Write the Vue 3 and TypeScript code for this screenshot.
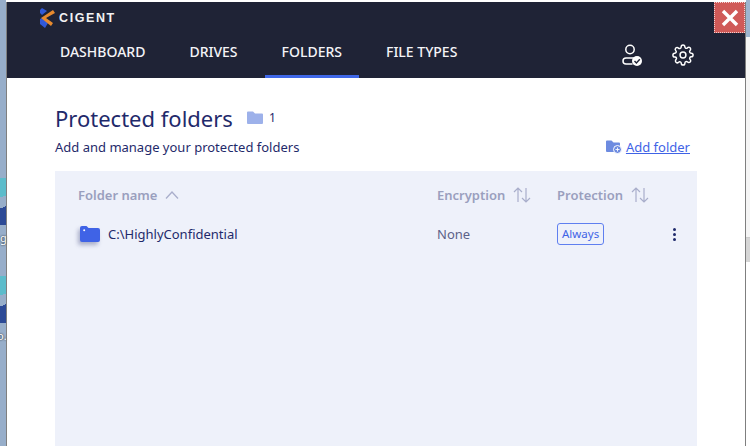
<script setup lang="ts">
const tabs = ['DASHBOARD', 'DRIVES', 'FOLDERS', 'FILE TYPES']
</script>

<template>
  <div class="desktop">
    <div class="left-strip">
      <div class="tile"></div>
      <span class="lab lab-a">g</span>
      <div class="tile tile-b"></div>
      <span class="lab lab-b">o.</span>
    </div>
    <div class="window">
      <header class="head">
        <div class="brand">
          <svg class="logo" width="16" height="20" viewBox="0 0 16 20">
            <path d="M3 0 L8 3 L3 7 L1 5 V2 Z" fill="#3159d8" />
            <path d="M1 11 L3 10 L9 15 L6 20 L1 16 Z" fill="#3159d8" />
            <path d="M14 2 L16 5 L7 10 L14 15 L12 18 L2 10 Z" fill="#e88a2e" />
          </svg>
          <span class="brand-name">CIGENT</span>
        </div>
        <nav class="nav">
          <a v-for="t in tabs" :key="t" class="tab" :class="{ on: t === 'FOLDERS' }">{{ t }}</a>
          <div class="tools">
            <svg width="24" height="24" viewBox="0 0 24 24" fill="none" stroke="#fff" stroke-width="1.5">
              <circle cx="10" cy="6.5" r="4.2" />
              <path d="M14 15 H6 A3 3 0 0 0 6 21 H12" stroke-linecap="round" />
              <circle cx="17" cy="18" r="5" fill="#fff" stroke="none" />
              <path d="M14.5 18 L16.4 20 L19.8 16.2" stroke="#1f2336" stroke-width="1.4" />
            </svg>
            <svg width="22" height="22" viewBox="0 0 24 24" fill="none" stroke="#fff" stroke-width="1.6" stroke-linejoin="round">
              <circle cx="12" cy="12" r="3.2" />
              <path d="M19.4 15a1.65 1.65 0 0 0 .33 1.82l.06.06a2 2 0 1 1-2.83 2.83l-.06-.06a1.65 1.65 0 0 0-2.82 1.17V21a2 2 0 1 1-4 0v-.09a1.65 1.65 0 0 0-2.82-1.11l-.06.06a2 2 0 1 1-2.83-2.83l.06-.06a1.65 1.65 0 0 0-1.17-2.82H3a2 2 0 1 1 0-4h.09A1.65 1.65 0 0 0 4.2 7.33l-.06-.06a2 2 0 1 1 2.83-2.83l.06.06a1.65 1.65 0 0 0 1.82.33H9a1.65 1.65 0 0 0 1-1.51V3a2 2 0 1 1 4 0v.09a1.65 1.65 0 0 0 2.82 1.17l.06-.06a2 2 0 1 1 2.83 2.83l-.06.06a1.65 1.65 0 0 0-.33 1.82V9a1.65 1.65 0 0 0 1.51 1H21a2 2 0 1 1 0 4h-.09a1.65 1.65 0 0 0-1.51 1z" />
            </svg>
          </div>
        </nav>
      </header>

      <main class="page">
        <div class="title-row">
          <h1>Protected folders</h1>
          <svg width="16" height="13" viewBox="0 0 16 13"><path d="M0 1.5 A1 1 0 0 1 1 .5 H6 L8 2.5 H15 A1 1 0 0 1 16 3.5 V12 A1 1 0 0 1 15 13 H1 A1 1 0 0 1 0 12 Z" fill="#9db1ea" /></svg>
          <span class="count">1</span>
        </div>
        <div class="sub-row">
          <p>Add and manage your protected folders</p>
          <div class="add">
            <svg width="16" height="14" viewBox="0 0 16 14">
              <path d="M0 1.5 A1 1 0 0 1 1 .5 H5.5 L7.5 2.5 H13 A1 1 0 0 1 14 3.5 V12 H1 A1 1 0 0 1 0 11 Z" fill="#6d8be0" />
              <circle cx="11.5" cy="9.5" r="4" fill="#6d8be0" stroke="#fff" />
              <path d="M11.5 7.5 V11.5 M9.5 9.5 H13.5" stroke="#fff" stroke-width=".9" />
            </svg>
            <a>Add folder</a>
          </div>
        </div>

        <section class="panel">
          <div class="cols heads">
            <div class="col-name">Folder name
              <svg width="14" height="8" viewBox="0 0 14 8" fill="none" stroke="#a9aecb" stroke-width="1.3"><path d="M1 7.5 L7 1 L13 7.5" /></svg>
            </div>
            <div class="sort">Encryption
              <svg width="18" height="16" viewBox="0 0 18 16" fill="none" stroke="#a9aecb" stroke-width="1.2"><path d="M5 15 V1 M1 5 L5 1 L9 5 M13 1 V15 M9 11 L13 15 L17 11" /></svg>
            </div>
            <div class="sort">Protection
              <svg width="18" height="16" viewBox="0 0 18 16" fill="none" stroke="#a9aecb" stroke-width="1.2"><path d="M5 15 V1 M1 5 L5 1 L9 5 M13 1 V15 M9 11 L13 15 L17 11" /></svg>
            </div>
            <div></div>
          </div>
          <div class="cols row">
            <div class="col-name path">
              <svg class="big-folder" width="20" height="16" viewBox="0 0 20 16">
                <path d="M0 2 A2 2 0 0 1 2 0 H6.5 L8.5 2 H18 A2 2 0 0 1 20 4 V14 A2 2 0 0 1 18 16 H2 A2 2 0 0 1 0 14 Z" fill="#3f63e6" />
                <circle cx="4.2" cy="4.2" r="1" fill="#fff" />
              </svg>
              <span>C:\HighlyConfidential</span>
            </div>
            <div class="none">None</div>
            <div><span class="badge">Always</span></div>
            <div class="dots"><i></i><i></i><i></i></div>
          </div>
        </section>
      </main>
      <button class="close" aria-label="Close">
        <svg width="20" height="20" viewBox="0 0 20 20" stroke="#fff" stroke-width="3.4"><path d="M3 3 L17 17 M17 3 L3 17" /></svg>
      </button>
    </div>
    <div class="right-strip">
      <div class="r-a"></div>
      <div class="r-b"></div>
      <div class="r-c"></div>
    </div>
  </div>
</template>

<style>
html, body { margin: 0; background: #fff; overflow: hidden; }
</style>

<style scoped>
.desktop {
  display: flex;
  width: 750px;
  height: 446px;
  overflow: hidden;
  font-family: "Noto Sans", "Open Sans", sans-serif;
  color: #1f2a6b;
  background: #fff;
}
.left-strip {
  position: relative;
  flex: 0 0 6px;
  background: #97aeca;
}
.tile {
  position: absolute;
  left: 0;
  top: 178px;
  width: 6px;
  height: 47px;
  background: linear-gradient(160deg, #5cbccb 0 40%, #97aeca 40% 62%, #2c4a96 62%);
}
.tile-b { top: 276px; }
.lab { position: absolute; left: 0; color: #fff; font-size: 11px; text-shadow: 0 0 2px #000; line-height: 12px; }
.lab-a { top: 232px; }
.lab-b { top: 330px; left: -3px; }
.window {
  position: relative;
  flex: 1;
  display: flex;
  flex-direction: column;
  margin-top: 2px;
  border-left: 1px solid #7f7f7f;
  border-right: 1px solid #7f7f7f;
  min-width: 0;
}
.head {
  display: flex;
  flex-direction: column;
  height: 76px;
  background: #1f2336;
  color: #fff;
}
.brand {
  display: flex;
  align-items: center;
  height: 29px;
  padding: 3px 0 0 32px;
  box-sizing: border-box;
}
.brand-name {
  margin-left: 4px;
  font-family: "Liberation Sans", sans-serif;
  font-size: 12.5px;
  font-weight: 700;
  letter-spacing: 1.6px;
  color: #f2f2f4;
}
.nav {
  flex: 1;
  display: flex;
  align-items: stretch;
  padding-left: 36px;
}
.tab {
  display: flex;
  align-items: center;
  padding: 0 17px;
  margin-right: 10px;
  font-size: 14px;
  font-weight: 500;
  color: #f4f4f8;
  border-bottom: 3px solid transparent;
  padding-bottom: 3px;
}
.on { border-bottom-color: #3f67e8; }
.tools {
  margin-left: auto;
  display: flex;
  align-items: center;
  gap: 28px;
  padding: 0 51px 0 0;
}
.page {
  flex: 1;
  padding: 24px 48px 0;
  display: flex;
  flex-direction: column;
  min-height: 0;
}
.title-row {
  display: flex;
  align-items: center;
  height: 32px;
}
h1 {
  margin: 0;
  font-size: 22px;
  font-weight: 400;
  color: #1f2a6b;
  line-height: 32px;
}
.title-row svg { margin: 0 0 2px 14px; }
.count { margin: 0 0 2px 6px; font-size: 12px; }
.sub-row {
  display: flex;
  justify-content: space-between;
  align-items: center;
  height: 22px;
  margin-top: 2px;
  padding-right: 7px;
}
.sub-row p { margin: 0; font-size: 13px; color: #1f2a6b; }
.add { display: flex; align-items: center; gap: 4px; }
.add a { font-size: 13px; color: #3f63e6; text-decoration: underline; }
.panel {
  flex: 1;
  margin: 13px 0 0;
  background: #eef1fa;
  width: 642px;
}
.cols {
  display: grid;
  grid-template-columns: 359px 120px 112px 1fr;
  padding-left: 23px;
  align-items: center;
}
.heads {
  height: 48px;
  font-size: 13px;
  font-weight: 600;
  color: #9a9fbe;
}
.col-name, .sort { display: flex; align-items: center; gap: 8px; }
.row { height: 30px; font-size: 13px; }
.path { gap: 8px; margin-left: 2px; color: #1f2a6b; }
.big-folder { filter: drop-shadow(-2px 3px 2px rgba(40, 50, 110, .35)); }
.none { color: #5c6288; }
.badge {
  display: inline-block;
  border: 1px solid #5f7ff0;
  border-radius: 3px;
  padding: 2px 4px;
  font-size: 11.5px;
  line-height: 16px;
  color: #3f63e6;
}
.dots { display: flex; flex-direction: column; align-items: center; gap: 2px; width: 10px; }
.dots i { width: 3px; height: 3px; border-radius: 50%; background: #1f2a6b; }
.close {
  position: absolute;
  top: 0;
  right: 0;
  width: 31px;
  height: 31px;
  padding: 0;
  display: flex;
  align-items: center;
  justify-content: center;
  background: #d05a58;
  border: 1px dotted #f2d0d0;
}
.right-strip {
  flex: 0 0 4px;
  display: flex;
  flex-direction: column;
  background: #fff;
}
.r-a { height: 37px; margin-top: 0; background: #9db5d0; flex: none; }
.r-b { height: 200px; background: #f5f5f5; border-bottom: 1px solid #ccc; }
.r-c { height: 24px; background: #d6d6d6; }
</style>
